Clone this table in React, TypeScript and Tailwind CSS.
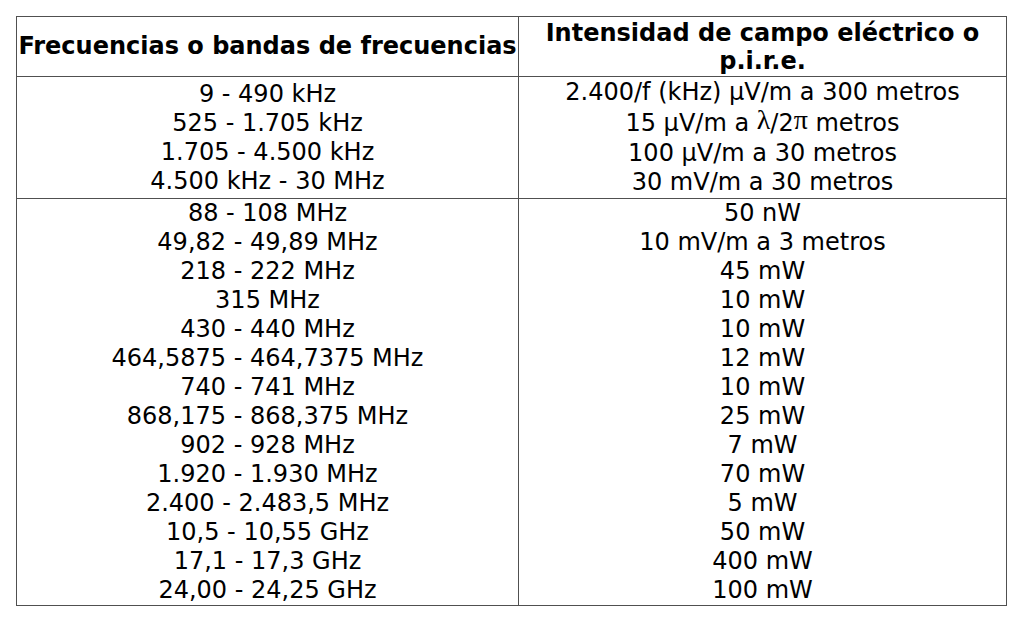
const bandsLow = ["9 - 490 kHz", "525 - 1.705 kHz", "1.705 - 4.500 kHz", "4.500 kHz - 30 MHz"];

const bandsHigh = [
  ["88 - 108 MHz", "50 nW"],
  ["49,82 - 49,89 MHz", "10 mV/m a 3 metros"],
  ["218 - 222 MHz", "45 mW"],
  ["315 MHz", "10 mW"],
  ["430 - 440 MHz", "10 mW"],
  ["464,5875 - 464,7375 MHz", "12 mW"],
  ["740 - 741 MHz", "10 mW"],
  ["868,175 - 868,375 MHz", "25 mW"],
  ["902 - 928 MHz", "7 mW"],
  ["1.920 - 1.930 MHz", "70 mW"],
  ["2.400 - 2.483,5 MHz", "5 mW"],
  ["10,5 - 10,55 GHz", "50 mW"],
  ["17,1 - 17,3 GHz", "400 mW"],
  ["24,00 - 24,25 GHz", "100 mW"],
];

const cell = "border border-[#505050] text-center align-middle p-0";

export default function App() {
  return (
    <div className="min-h-[623px] bg-white pt-[16px] pl-[16px] font-['DejaVu_Sans',sans-serif] text-black text-[24px] leading-[29px]">
      <table className="border-collapse w-[990px] table-fixed">
        <colgroup>
          <col className="w-[502px]" />
          <col className="w-[488px]" />
        </colgroup>
        <thead>
          <tr className="h-[60px]">
            <th className={`${cell} font-bold whitespace-nowrap`}>Frecuencias o bandas de frecuencias</th>
            <th className={`${cell} font-bold leading-[28px] px-2`}>Intensidad de campo eléctrico o p.i.r.e.</th>
          </tr>
        </thead>
        <tbody>
          <tr className="h-[122px]">
            <td className={cell}>
              {bandsLow.map((b) => (
                <div key={b}>{b}</div>
              ))}
            </td>
            <td className={cell}>
              <div>2.400/f (kHz) µV/m a 300 metros</div>
              <div className="h-[32px] leading-[32px]">
                15 µV/m a{" "}
                <span className="font-['Liberation_Serif',serif] text-[28px] leading-[0] relative top-[-2px]">λ</span>
                /2
                <span className="font-['Liberation_Serif',serif] text-[28px] leading-[0] relative top-[-2px]">π</span> metros
              </div>
              <div>100 µV/m a 30 metros</div>
              <div>30 mV/m a 30 metros</div>
            </td>
          </tr>
          <tr>
            <td className={cell}>
              {bandsHigh.map(([b]) => (
                <div key={b}>{b}</div>
              ))}
            </td>
            <td className={cell}>
              {bandsHigh.map(([b, v]) => (
                <div key={b}>{v}</div>
              ))}
            </td>
          </tr>
        </tbody>
      </table>
    </div>
  );
}
